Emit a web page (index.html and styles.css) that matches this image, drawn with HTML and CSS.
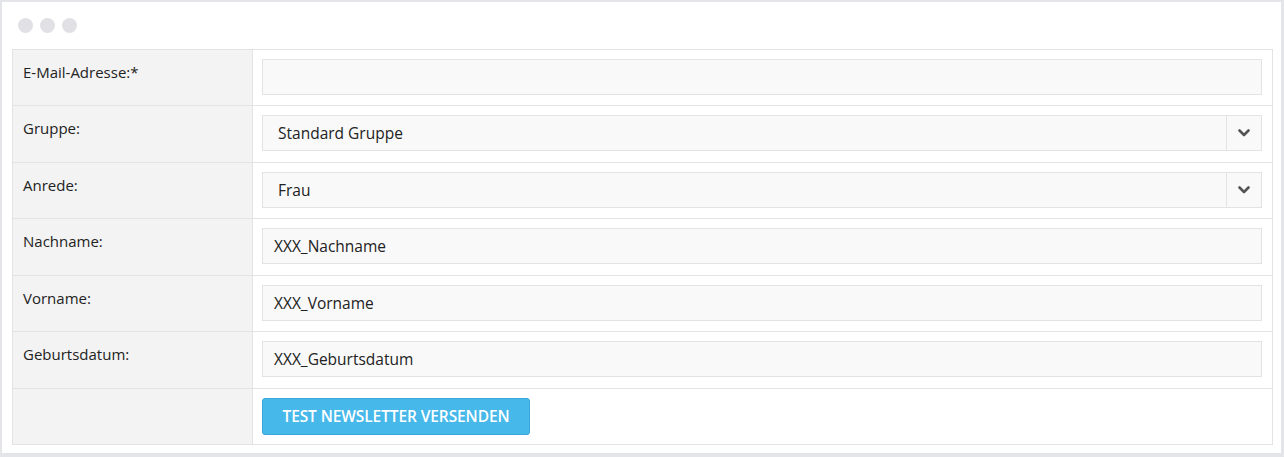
FILE: index.html
```html
<!DOCTYPE html>
<html lang="de">
<head>
<meta charset="utf-8">
<title>Test Newsletter</title>
<link rel="stylesheet" href="styles.css">
</head>
<body>
<div class="frame">
  <div class="dots"><span class="dot"></span><span class="dot"></span><span class="dot"></span></div>
  <div class="table">
    <div class="row">
      <div class="label">E-Mail-Adresse:*</div>
      <div class="field"><div class="input"></div></div>
    </div>
    <div class="row">
      <div class="label">Gruppe:</div>
      <div class="field"><div class="input select"><span class="val">Standard Gruppe</span><span class="arrow"><svg width="12" height="8" viewBox="0 0 12 8"><path d="M1.5 1.5 L6 6 L10.5 1.5" fill="none" stroke="#555" stroke-width="2.6" stroke-linecap="round" stroke-linejoin="round"/></svg></span></div></div>
    </div>
    <div class="row">
      <div class="label">Anrede:</div>
      <div class="field"><div class="input select"><span class="val">Frau</span><span class="arrow"><svg width="12" height="8" viewBox="0 0 12 8"><path d="M1.5 1.5 L6 6 L10.5 1.5" fill="none" stroke="#555" stroke-width="2.6" stroke-linecap="round" stroke-linejoin="round"/></svg></span></div></div>
    </div>
    <div class="row">
      <div class="label">Nachname:</div>
      <div class="field"><div class="input"><span class="val">XXX_Nachname</span></div></div>
    </div>
    <div class="row">
      <div class="label">Vorname:</div>
      <div class="field"><div class="input"><span class="val">XXX_Vorname</span></div></div>
    </div>
    <div class="row">
      <div class="label">Geburtsdatum:</div>
      <div class="field"><div class="input"><span class="val">XXX_Geburtsdatum</span></div></div>
    </div>
    <div class="row">
      <div class="label"></div>
      <div class="field"><button class="btn">TEST NEWSLETTER VERSENDEN</button></div>
    </div>
  </div>
</div>
</body>
</html>
```
FILE: styles.css
```css
* { box-sizing: border-box; }
html, body { margin: 0; padding: 0; background: #fff; }
body { font-family: "Open Sans", "Liberation Sans", sans-serif; color: #222; }

.frame {
  width: 1284px;
  height: 457px;
  border-style: solid;
  border-color: #e4e5e9;
  border-width: 2px 3px 4px 2px;
  padding: 0 8px 0 10px;
  background: #fff;
}

.dots {
  display: flex;
  gap: 7px;
  height: 47px;
  padding: 16px 0 0 6px;
}
.dot {
  width: 15px;
  height: 15px;
  border-radius: 50%;
  background: #e1e1e5;
}

.table {
  border: 1px solid #e3e3e3;
  border-bottom: none;
}
.row {
  display: grid;
  grid-template-columns: 240px 1fr;
  height: 56.43px;
  border-bottom: 1px solid #e3e3e3;
}
.label {
  background: #f3f3f3;
  border-right: 1px solid #e3e3e3;
  font-size: 15px;
  line-height: 20px;
  padding: 12px 0 0 10px;
  color: #222;
}
.field {
  padding: 9px 10px 0 9px;
}
.input {
  height: 36px;
  background: #f9f9f9;
  border: 1px solid #e3e3e3;
  display: flex;
  align-items: center;
  font-size: 15.5px;
  color: #222;
}
.input .val { padding-left: 11px; flex: 1; }
.select .val { padding-left: 15px; }
.arrow {
  width: 35px;
  height: 100%;
  border-left: 1px solid #e3e3e3;
  display: flex;
  align-items: center;
  justify-content: center;
}
.btn {
  width: 268px;
  height: 37px;
  background: #46b8ea;
  border: 1px solid #3aa5d6;
  border-radius: 3px;
  color: #fff;
  font-family: "Open Sans", "Liberation Sans", sans-serif;
  font-size: 15.5px;
  font-weight: 600;
  padding: 0;
  letter-spacing: -0.1px;
}
```
